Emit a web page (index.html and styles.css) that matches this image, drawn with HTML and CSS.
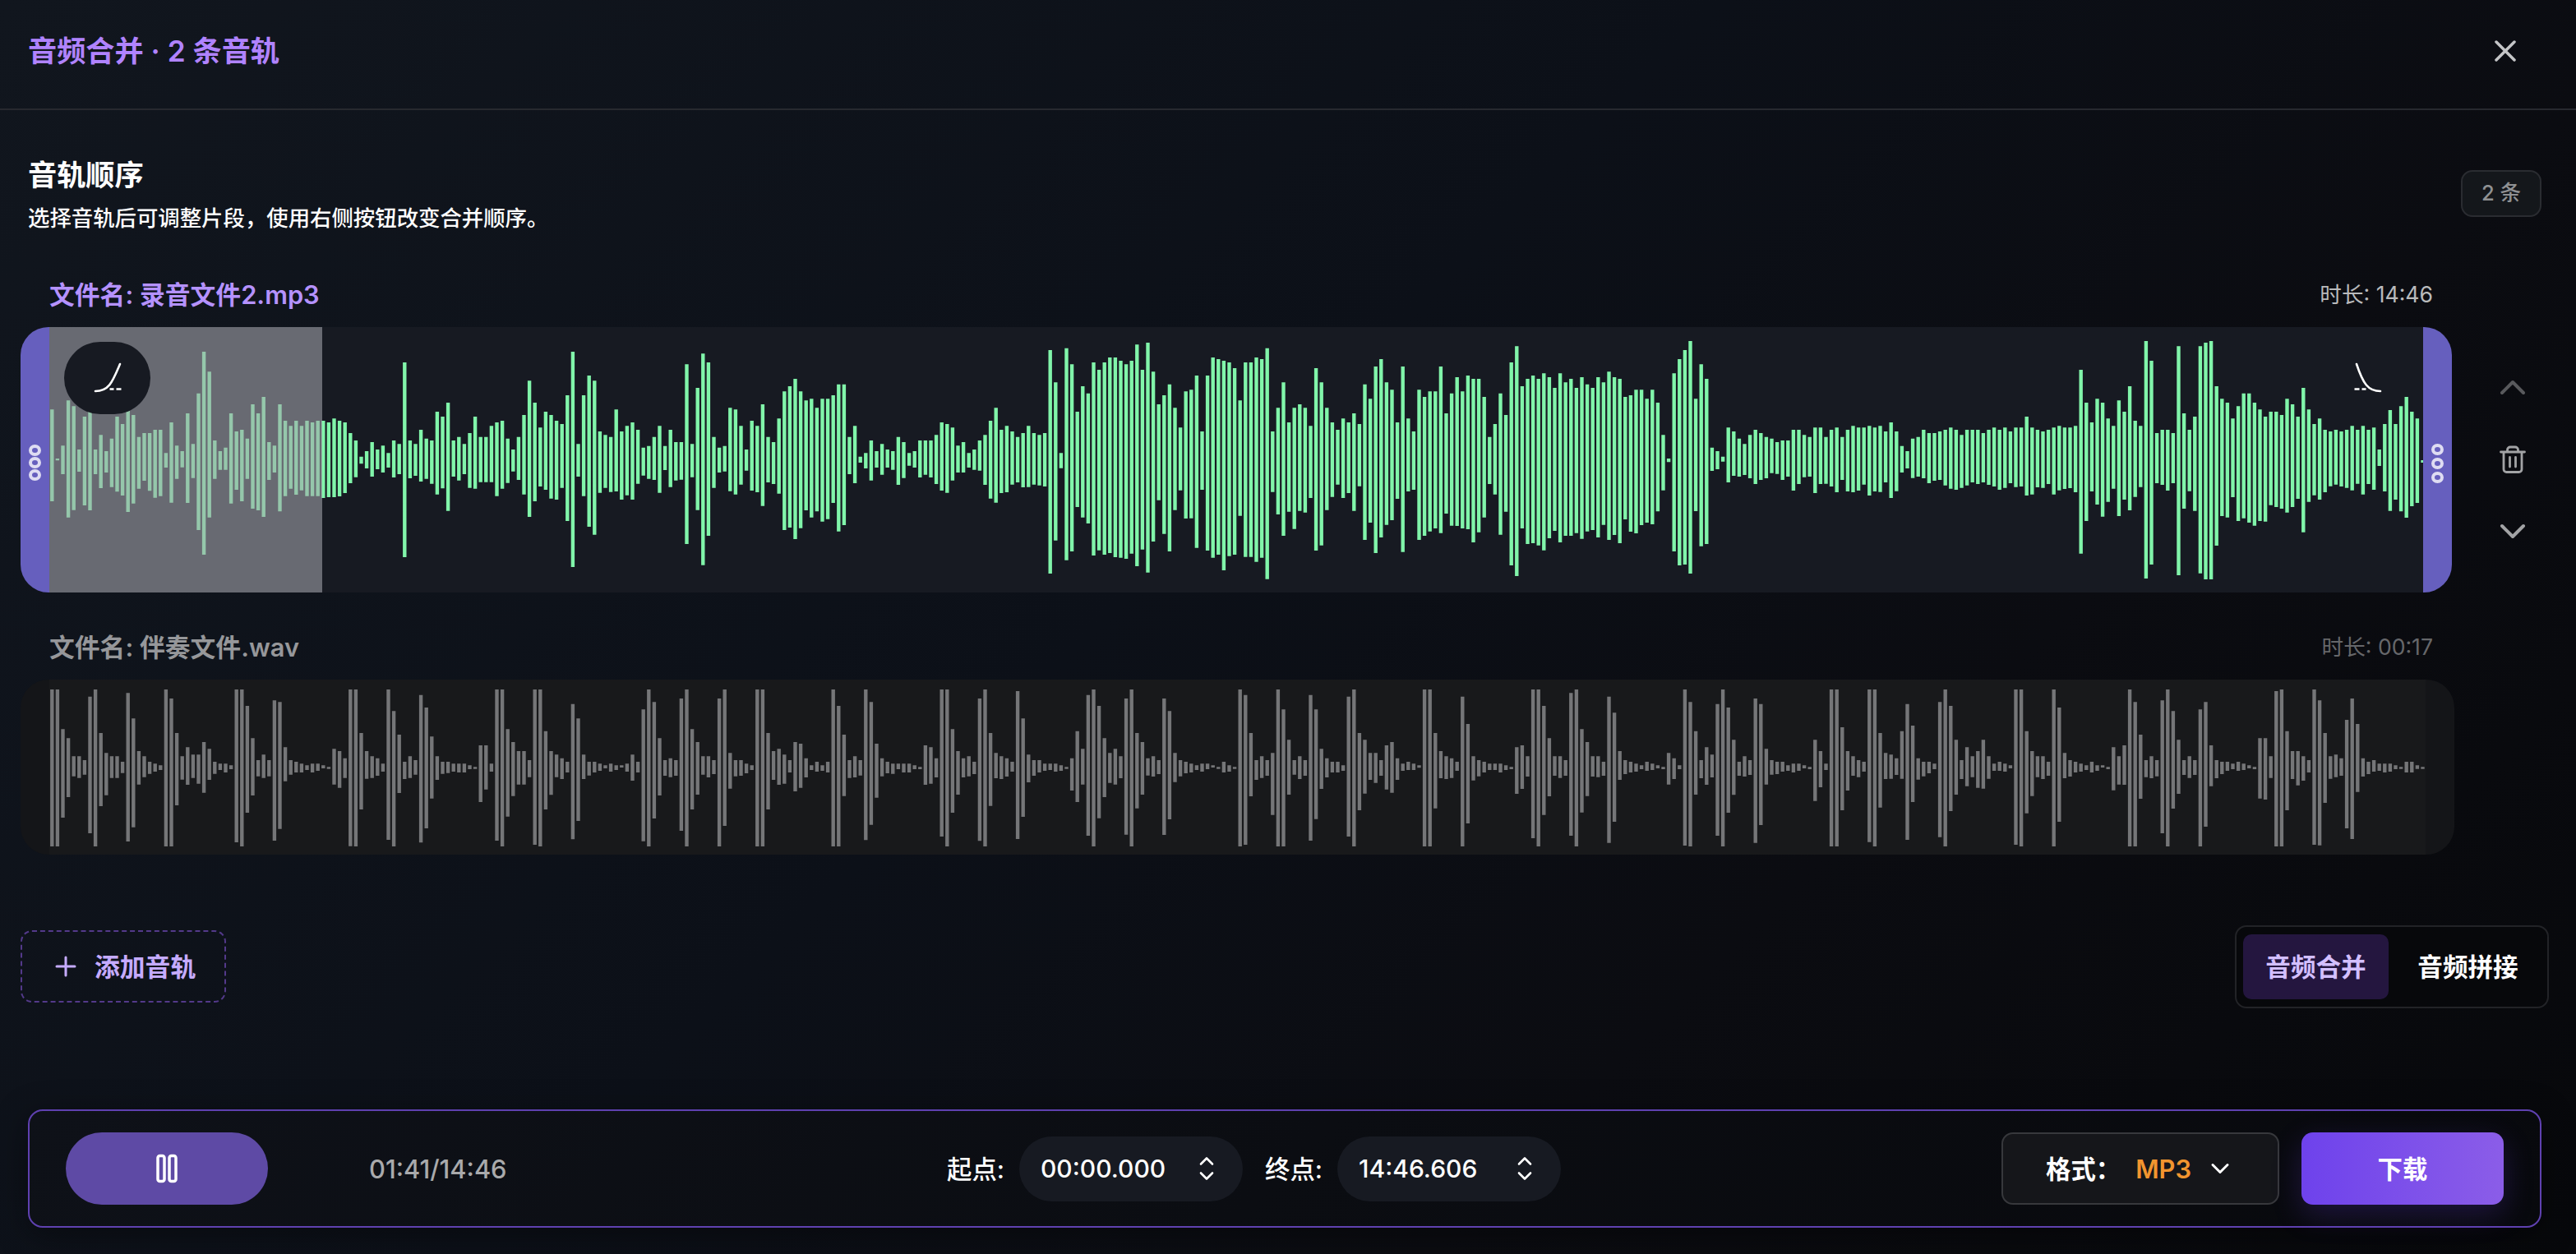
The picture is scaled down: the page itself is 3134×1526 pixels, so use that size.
FILE: index.html
```html
<!DOCTYPE html>
<html lang="zh-CN">
<head>
    <meta charset="UTF-8">
    <meta name="viewport" content="width=device-width, initial-scale=1.0">
    <title>音频合并</title>
    <link rel="stylesheet" href="styles.css">
</head>
<body>
    <header class="header">
        <h1 class="header-title">音频合并 · 2 条音轨</h1>
        <button class="icon-button close">
            <svg width="30" height="30" viewBox="0 0 30 30"><path d="M4 4L26 26M26 4L4 26"/></svg>
        </button>
    </header>

    <section class="intro">
        <div>
            <h2 class="intro-title">音轨顺序</h2>
            <p class="intro-text">选择音轨后可调整片段，使用右侧按钮改变合并顺序。</p>
        </div>
        <span class="badge">2 条</span>
    </section>

    <main class="tracks">
        <div class="track active">
            <div class="track-main">
                <div class="track-head">
                    <span class="track-name">文件名: 录音文件2.mp3</span>
                    <span class="track-time">时长: 14:46</span>
                </div>
                <div class="panel">
                    <div class="handle left"><i></i><i></i><i></i></div>
                    <div class="wave-box">
                        <svg class="wave" id="wave-1" viewBox="0 54 2890.8 969" preserveAspectRatio="none"></svg>
                        <div class="played"></div>
                        <button class="fade fade-in">
                            <svg width="36" height="38" viewBox="0 0 36 38"><path d="M3 36C20 36 24 24 33 3"/><path class="dash" d="M20.500 33.500h5M28.500 33.500h6"/></svg>
                        </button>
                        <button class="fade fade-out">
                            <svg width="36" height="38" viewBox="0 0 36 38"><path d="M4 3C12 27 18 36 33 36"/><path class="dash" d="M1.500 33.500h6M10.500 33.500h5"/></svg>
                        </button>
                    </div>
                    <div class="handle right"><i></i><i></i><i></i></div>
                </div>
            </div>
            <div class="track-actions">
                <button class="icon-button dim">
                    <svg width="36" height="36" viewBox="0 0 36 36"><path d="M5 25L18 12L31 25"/></svg>
                </button>
                <button class="icon-button">
                    <svg class="trash" width="36" height="36" viewBox="0 0 36 36"><path d="M3.500 9h29M11.500 9V6.500a3.500 3.500 0 0 1 3.500-3.500h6a3.500 3.500 0 0 1 3.500 3.500V9M7 9v21a3.500 3.500 0 0 0 3.500 3.500h15A3.500 3.500 0 0 0 29 30V9M14.500 15.500v11.500M21.500 15.500v11.500"/></svg>
                </button>
                <button class="icon-button">
                    <svg width="36" height="36" viewBox="0 0 36 36"><path d="M5 11L18 24L31 11"/></svg>
                </button>
            </div>
        </div>

        <div class="track muted">
            <div class="track-main">
                <div class="track-head">
                    <span class="track-name">文件名: 伴奏文件.wav</span>
                    <span class="track-time">时长: 00:17</span>
                </div>
                <div class="panel">
                    <div class="wave-box">
                        <svg class="wave" id="wave-2" viewBox="0 261 2890.8 639" preserveAspectRatio="none"></svg>
                    </div>
                </div>
            </div>
        </div>
    </main>

    <div class="toolbar">
        <button class="add-track">
            <svg width="26" height="26" viewBox="0 0 26 26"><path d="M13 2V24M2 13H24"/></svg>
            <span>添加音轨</span>
        </button>
        <div class="modes">
            <button class="mode selected">音频合并</button>
            <button class="mode">音频拼接</button>
        </div>
    </div>

    <footer class="player">
        <button class="pause">
            <svg width="30" height="38" viewBox="0 0 30 38"><rect x="4" y="3.500" width="8" height="31" rx="2.500"/><rect x="18" y="3.500" width="8" height="31" rx="2.500"/></svg>
        </button>
        <span class="clock">01:41/14:46</span>
        <div class="range">
            <span class="range-label">起点:</span>
            <div class="stepper">
                <span>00:00.000</span>
                <svg width="20" height="30" viewBox="0 0 20 30"><path d="M3 9.500L10 2.500L17 9.500M3 20.500L10 27.500L17 20.500"/></svg>
            </div>
            <span class="range-label">终点:</span>
            <div class="stepper">
                <span>14:46.606</span>
                <svg width="20" height="30" viewBox="0 0 20 30"><path d="M3 9.500L10 2.500L17 9.500M3 20.500L10 27.500L17 20.500"/></svg>
            </div>
        </div>
        <button class="format">
            <span class="format-label">格式：</span>
            <span class="format-value">MP3</span>
            <svg width="24" height="16" viewBox="0 0 24 16"><path d="M3 3.500L12 12.500L21 3.500"/></svg>
        </button>
        <button class="download">下载</button>
    </footer>

    <script src="script.js"></script>
</body>
</html>
```

FILE: styles.css
```css
* {
    box-sizing: border-box;
}
body {
    margin: 0;
    width: 3134px;
    height: 1526px;
    overflow: hidden;
    display: flex;
    flex-direction: column;
    background: linear-gradient(135deg, #11161e 0%, #0c1018 45%, #0b0c11 70%, #07080b 100%);
    color: #fff;
    font-family: Inter, "Noto Sans CJK SC", sans-serif;
}
h1, h2, p {
    margin: 0;
}
button {
    margin: 0;
    padding: 0;
    border: none;
    background: none;
    color: inherit;
    font-family: inherit;
    cursor: pointer;
}
svg {
    display: block;
    fill: none;
    stroke: currentColor;
    stroke-width: 3.5;
    stroke-linecap: round;
    stroke-linejoin: round;
    flex-shrink: 0;
}

/* header */
.header {
    height: 134px;
    padding: 0 71px 9px 34px;
    display: flex;
    justify-content: space-between;
    align-items: center;
    border-bottom: 2px solid #27292f;
}
.header-title {
    padding-bottom: 4px;
    font-size: 35.2px;
    font-weight: 600;
    color: #b083ff;
}
.icon-button {
    color: #a2a3a5;
}
.close {
    color: #c4c5c7;
}
.dim {
    color: #58595c;
}

.intro {
    height: 184px;
    padding: 54px 42px 0 34px;
    display: flex;
    justify-content: space-between;
}
.intro-title {
    font-size: 35.2px;
    line-height: 50px;
    font-weight: 700;
}
.intro-text {
    margin-top: 6px;
    font-size: 26.4px;
    line-height: 42px;
    font-weight: 500;
}
.badge {
    width: 98px;
    height: 57px;
    margin-top: 19px;
    border: 2px solid #2a2c31;
    border-radius: 14px;
    background: #14171b;
    color: #8f9193;
    font-size: 25.6px;
    line-height: 52px;
    font-weight: 500;
    text-align: center;
}

/* tracks */
.tracks {
    padding-left: 25px;
}
.track {
    display: flex;
}
.track-main {
    width: 2958px;
}
.track-head {
    height: 80px;
    padding: 0 23px 3px 35px;
    display: flex;
    justify-content: space-between;
    align-items: center;
}
.track-name {
    font-size: 30.8px;
    font-weight: 600;
    color: #b592ff;
}
.track-time {
    font-size: 26.6px;
    color: #b9babc;
}
.panel {
    display: flex;
    height: 323px;
    border-radius: 34px;
    background: #171a22;
    overflow: hidden;
}
.wave-box {
    position: relative;
    flex: 1;
    overflow: hidden;
}
.wave {
    width: 2890.8px;
    height: 100%;
    stroke: none;
    fill: #81f5aa;
}
.played {
    position: absolute;
    left: 0;
    top: 0;
    width: 332px;
    height: 100%;
    background: rgba(163, 166, 173, 0.58);
}
.handle {
    width: 35px;
    padding-top: 6px;
    display: flex;
    flex-direction: column;
    justify-content: center;
    align-items: center;
    gap: 1px;
    background: #665fbe;
}
.handle.right {
    gap: 3px;
    padding-top: 9px;
}
.handle i {
    width: 15px;
    height: 14px;
    border: 4px solid #dedcf2;
    border-radius: 50%;
}
.fade {
    position: absolute;
    top: 18px;
    width: 105px;
    height: 88px;
    padding-bottom: 2px;
    border-radius: 44px;
    background: #171a22;
    display: flex;
    justify-content: center;
    align-items: center;
}
.fade svg {
    stroke-width: 2.6;
}
.fade .dash {
    stroke-linecap: butt;
}
.fade-in {
    left: 18px;
}
.fade-out {
    right: 15px;
    background: none;
}
.track-actions {
    width: 148px;
    padding-top: 79px;
    display: flex;
    flex-direction: column;
    justify-content: center;
    align-items: center;
    gap: 52px;
}
.track-actions svg {
    stroke-width: 4;
}
.track-actions .trash {
    stroke-width: 2.8;
}
.muted {
    margin-top: 26px;
}
.muted .track-main {
    width: 2961px;
}
.muted .track-head {
    padding-right: 26px;
}
.muted .track-name {
    color: #96979a;
}
.muted .track-time {
    color: #66676a;
}
.muted .panel {
    height: 213px;
    padding: 0 35px;
    background: #141518;
}
.muted .wave-box {
    background: #18191b;
}
.muted .wave {
    fill: #757678;
}

/* add button and mode switch */
.toolbar {
    height: 102px;
    margin-top: 85px;
    padding: 0 33px 0 25px;
    display: flex;
    justify-content: space-between;
    align-items: center;
}
.add-track {
    width: 250px;
    height: 88px;
    padding-left: 40px;
    display: flex;
    align-items: center;
    gap: 22px;
    border: 2px dashed #53398a;
    border-radius: 14px;
    color: #c5abff;
    font-size: 30.8px;
    font-weight: 600;
    white-space: nowrap;
}
.add-track span {
    padding-bottom: 3px;
}
.add-track svg {
    stroke-width: 3;
}
.modes {
    display: flex;
    gap: 8px;
    padding: 9px 8px;
    border: 2px solid #222327;
    border-radius: 14px;
    background: #07080b;
}
.mode {
    width: 177px;
    height: 79px;
    padding-bottom: 3px;
    border-radius: 10px;
    font-size: 30.6px;
    font-weight: 600;
}
.mode.selected {
    background: #24163f;
    color: #d3bfff;
}

/* player bar */
.player {
    width: 3058px;
    height: 144px;
    margin: 123px 0 0 34px;
    padding: 0 44px;
    display: flex;
    align-items: center;
    border: 2px solid #5f41b0;
    border-radius: 18px;
    background: linear-gradient(135deg, #0e1118, #0b0d12 50%, #08090d);
    box-shadow: 0 8px 40px rgba(0, 0, 0, 0.4);
    font-size: 30.4px;
}
.pause {
    width: 246px;
    height: 88px;
    border-radius: 44px;
    background: #5e4aa5;
    display: flex;
    justify-content: center;
    align-items: center;
}
.clock {
    width: 580px;
    margin-left: 123px;
    color: #a9aaac;
    font-size: 30.8px;
    font-weight: 500;
}
.range {
    display: flex;
    align-items: center;
    margin-left: 123px;
    font-weight: 500;
}
.range-label {
    width: 88px;
    padding-bottom: 2px;
    white-space: nowrap;
}
.stepper {
    width: 272px;
    height: 79px;
    margin-right: 27px;
    padding: 0 34px 0 26px;
    display: flex;
    justify-content: space-between;
    align-items: center;
    border-radius: 40px;
    background: #171a22;
    font-size: 30px;
}
.stepper svg {
    stroke-width: 2.6;
}
.format {
    width: 338px;
    height: 88px;
    margin-left: auto;
    padding-left: 52px;
    display: flex;
    align-items: center;
    border: 2px solid #37383c;
    border-radius: 14px;
    background: #15161a;
    font-size: 30.4px;
    font-weight: 600;
    white-space: nowrap;
}
.format-label {
    padding-bottom: 3px;
}
.format-value {
    margin: 0 23px 0 18px;
    color: #f2952f;
    font-size: 30.8px;
}
.format svg {
    stroke-width: 3;
}
.download {
    width: 246px;
    height: 88px;
    margin-left: 27px;
    padding-bottom: 3px;
    border-radius: 14px;
    background: linear-gradient(90deg, #6e42ec, #8b5de8);
    box-shadow: 0 12px 36px rgba(110, 66, 236, 0.22);
    font-size: 30.4px;
    font-weight: 700;
}
```

FILE: script.js
```js
// each item is the top and bottom edge of one bar, in viewBox units
const voice = `
355-690 534-541 487-591 322-749 343-722 501-582 381-705 362-723 501-591 448-642 507-585 461-638 381-655 408-669 360-729 375-698
455-644 441-615 441-652 429-677 429-671 514-567 402-695 487-608 507-566 369-696 481-605 296-795 144-885 217-749 468-608 507-575
494-575 369-698 435-648 429-690 461-608 336-717 369-723 309-747 474-612 487-585 336-727 396-671 415-644 396-666 415-650 396-671
402-671 396-671 396-678 402-675 388-675 396-672 402-660 441-624 468-602 527-553 507-570 474-600 501-573 487-585 514-567 468-603
481-591 183-894 468-606 481-597 429-618 461-608 468-626 363-665 381-643 330-725 468-600 455-614 481-591 441-641 381-644 455-620
455-620 415-620 402-671 396-644 461-623 501-581 455-612 375-665 250-747 330-690 421-636 363-648 375-680 396-684 408-641 303-762
144-930 481-600 303-671 231-783 250-812 435-659 448-641 455-656 355-654 435-684 415-668 402-684 429-626 494-596 488-608 455-612
415-659 488-576 429-638 474-614 474-611 190-846 481-602 276-722 151-923 183-816 455-641 494-585 488-581 349-653 355-665 415-629
501-578 396-651 415-657 336-707 455-621 474-627 388-662 289-795 270-786 243-828 289-788 322-723 316-749 349-727 316-764 316-755
303-696 263-800 263-777 455-591 415-624 527-549 514-570 468-614 507-567 481-593 501-567 507-575 455-630 474-605 514-560 507-567
468-603 468-593 468-603 448-627 402-651 408-659 421-614 487-585 474-585 514-567 501-575 468-578 448-630 396-680 349-695 429-660
415-657 435-629 455-621 441-639 415-638 441-629 448-632 441-636 138-954 256-833 514-569 131-905 190-873 363-711 270-749 296-771
183-888 210-869 183-885 165-879 165-894 177-896 190-900 177-881 118-927 210-866 111-950 217-837 336-686 303-809 263-873 349-722
421-650 289-753 283-752 231-860 435-648 231-870 165-896 171-885 177-942 183-890 204-885 322-743 183-893 183-893 165-911 171-896
131-974 435-656 349-738 256-816 402-728 349-791 336-725 349-731 415-678 204-870 256-851 349-722 402-674 429-629 388-678 402-660
369-725 408-635 263-831 316-768 198-879 171-822 256-776 283-759 402-681 198-875 388-654 435-648 283-831 309-816 289-800 289-789
198-806 369-735 296-779 237-780 289-789 231-792 243-840 243-803 309-749 455-627 408-665 296-812 375-728 183-924 124-963 270-789
243-846 231-843 243-851 223-869 237-825 276-798 223-840 256-816 243-816 276-806 237-827 263-800 276-795 237-822 256-776 217-831
237-813 243-843 309-756 303-801 283-807 283-777 316-768 283-774 330-727 448-650 534-547 223-873 171-924 138-921 105-954 316-726
190-854 243-846 494-579 507-573 527-545 421-621 435-597 461-600 481-594 448-606 429-627 441-612 455-606 461-587 474-590 468-612
468-600 429-651 429-627 448-602 455-600 421-660 421-627 455-626 429-636 421-657 455-612 429-654 415-657 421-651 421-629 415-669
421-654 415-656 435-621 402-678 435-653 488-585 507-570 461-605 455-600 429-606 441-624 441-615 435-612 429-632 421-644 429-648
448-641 429-632 429-621 429-627 441-621 429-630 421-636 429-648 421-641 435-624 421-638 421-636 381-669 421-665 429-639 435-641
429-627 421-665 415-650 421-645 421-642 415-657 210-881 330-762 402-654 316-702 330-746 388-692 415-644 322-744 363-684 270-723
396-674 415-638 105-972 177-921 441-624 429-630 429-651 441-624 124-960 369-717 429-653 381-725 124-953 111-975 105-975 270-852
316-744 330-749 388-675 343-762 296-752 296-768 330-779 355-762 381-764 363-704 363-711 375-717 316-731 336-711 381-681 276-803
355-692 408-668 388-684 429-657 435-635 429-629 435-636 429-641 415-650 429-626 415-665 429-627 421-648 501-561 408-654 357-725
408-684 343-727 309-750 363-708 388-696 540-549`;

const backing = `
297-870 297-870 442-765 475-690 541-614 541-620 555-608 323-822 297-870 456-723 529-683 541-620 541-620 561-602 310-852 403-800
522-644 541-617 561-605 568-597 574-591 297-870 330-870 456-720 541-626 508-645 535-620 535-641 489-674 514-627 561-605 568-591
568-600 574-588 297-855 297-870 357-747 475-684 555-614 535-620 555-614 337-849 343-806 508-632 555-608 561-600 568-600 574-591
568-600 568-594 574-585 580-587 514-644 522-656 548-620 297-869 297-870 456-735 522-623 541-620 548-612 568-597 297-846 376-870
462-675 561-624 541-620 555-608 317-856 363-804 469-695 541-627 561-605 561-602 568-597 568-600 568-600 574-588 580-587 501-708
501-662 568-597 297-849 297-870 442-761 489-686 522-644 522-644 555-617 297-864 297-870 449-735 522-682 535-617 548-624 561-600
350-844 403-777 535-624 561-611 561-600 568-594 574-585 568-597 574-591 574-582 568-597 535-630 561-600 370-851 297-870 343-768
475-684 555-612 548-617 555-612 330-813 297-870 442-735 489-681 541-608 541-618 555-606 330-870 297-795 529-659 555-614 555-612
568-603 574-591 297-870 297-870 456-735 522-627 514-645 535-641 555-600 489-669 495-656 548-618 574-591 561-597 574-594 561-600
297-870 357-870 462-686 555-620 541-618 555-611 297-847 343-791 495-692 548-614 561-603 568-605 568-588 568-600 568-600 574-588
580-588 501-645 508-641 548-618 297-834 297-870 442-747 522-681 548-618 541-614 561-606 330-850 297-870 456-722 529-621 541-624
548-615 561-597 303-843 403-762 535-636 555-612 555-600 568-594 568-591 568-597 574-594 580-587 548-666 449-708 514-644 317-831
297-870 357-767 475-690 529-638 514-644 541-621 330-827 297-870 456-731 489-681 548-611 541-615 555-606 330-828 376-771 529-635
555-614 561-603 568-600 574-591 568-597 568-588 574-582 580-587 561-600 574-597 580-587 297-870 317-864 456-687 555-627 541-620
555-612 529-755 297-870 370-870 481-681 555-608 541-624 555-612 317-849 370-770 514-660 548-618 561-600 561-600 574-594 323-834
297-870 456-738 481-677 529-627 529-638 555-612 501-662 489-674 548-627 568-594 561-591 568-591 574-583 297-870 297-870 456-731
522-621 541-624 548-620 561-594 323-870 423-786 541-629 555-614 561-600 568-591 568-591 568-600 574-591 580-588 508-678 501-660
541-615 297-840 297-870 357-755 475-687 541-612 541-620 555-612 310-831 297-870 442-746 489-686 541-615 541-617 561-612 323-857
382-780 522-627 555-606 561-600 568-597 574-588 561-594 568-591 574-585 580-588 529-644 548-624 574-588 297-867 343-870 449-681
555-621 508-645 535-618 350-831 297-870 363-747 481-682 561-612 541-615 555-609 330-857 350-792 514-644 555-608 561-606 561-597
574-594 568-600 568-594 574-585 580-588 481-704 522-654 568-591 297-870 297-870 435-738 522-666 541-612 555-617 561-597 297-854
297-870 456-728 529-624 535-623 548-609 449-623 350-846 429-708 548-626 561-614 561-603 568-588 343-836 297-870 357-741 481-681
555-624 508-650 541-617 522-656 481-659 541-623 568-594 561-594 568-597 574-585 297-864 297-870 449-749 522-686 541-617 541-624
561-612 297-870 363-780 529-621 555-615 561-600 568-597 574-591 561-600 574-594 574-582 580-588 508-665 541-644 501-645 297-870
343-870 462-696 555-617 541-621 555-614 337-822 297-870 376-732 481-678 555-609 541-620 555-609 370-870 343-798 501-650 555-621
561-606 561-594 568-588 561-594 568-591 574-585 580-588 475-695 475-699 541-620 303-870 297-870 449-738 522-624 522-647 541-630
555-600 297-864 337-866 456-711 541-623 535-617 548-612 408-804 330-843 423-671 548-615 561-606 555-597 568-594 568-600 568-597
574-588 580-587 561-600 561-600 574-587 580-587`;

function drawWave(id, data) {
    let d = '';
    data.trim().split(/\s+/).forEach((bar, i) => {
        const [top, bottom] = bar.split('-').map(Number);
        d += `M${(i * 6.6 + 1.1).toFixed(1)} ${top}h4.4V${bottom}h-4.4z`;
    });
    const path = document.createElementNS('http://www.w3.org/2000/svg', 'path');
    path.setAttribute('d', d);
    document.getElementById(id).appendChild(path);
}

drawWave('wave-1', voice);
drawWave('wave-2', backing);
```
